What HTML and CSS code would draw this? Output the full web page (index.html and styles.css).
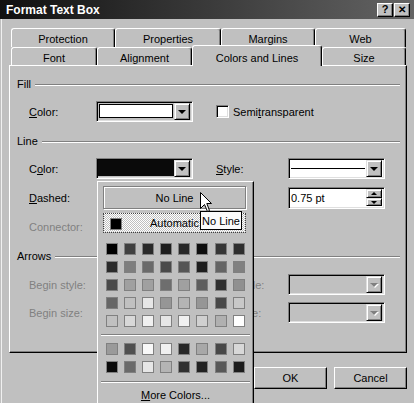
FILE: index.html
```html
<!DOCTYPE html>
<html>
<head>
<meta charset="utf-8">
<link rel="stylesheet" href="styles.css">
</head>
<body>
<div class="window">
  <div class="titlebar">
    <span class="title">Format Text Box</span>
    <div class="tbtns"><span class="tbtn">?</span><span class="tbtn x">✕</span></div>
  </div>

  <div class="dialog">
  <div class="tabs">
    <div class="tabrow back">
      <div class="tab w104">Protection</div>
      <div class="tab w106">Properties</div>
      <div class="tab w94">Margins</div>
      <div class="tab w91">Web</div>
    </div>
    <div class="tabrow front">
      <div class="tab w86">Font</div>
      <div class="tab w95">Alignment</div>
      <div class="tab w130 selected">Colors and Lines</div>
      <div class="tab w84">Size</div>
    </div>
  </div>

  <div class="panel">
    <div class="ghead mt11">Fill</div>
    <div class="row mt10">
      <span class="lbl"><u>C</u>olor:</span>
      <div class="combo"><div class="swatch white"></div><span class="dd"><i class="tri"></i></span></div>
      <span></span>
      <div class="check"><span class="box"></span><span>Semi<u>t</u>ransparent</span></div>
    </div>

    <div class="ghead mt12">Line</div>
    <div class="row mt10">
      <span class="lbl">C<u>o</u>lor:</span>
      <div class="combo"><div class="swatch black"></div><span class="dd"><i class="tri"></i></span></div>
      <span></span>
      <span class="lbl"><u>S</u>tyle:</span>
      <div class="combo white"><div class="linesample"><i></i></div><span class="dd"><i class="tri"></i></span></div>
    </div>
    <div class="row h22 mt8">
      <span class="lbl"><u>D</u>ashed:</span>
      <span></span>
      <span></span>
      <span class="lbl"><u>W</u>eight:</span>
      <div class="combo white"><div class="spintext">0.75 pt</div><span class="spin"><span class="sb"><i class="tri up"></i></span><span class="sb"><i class="tri sm"></i></span></span></div>
    </div>
    <div class="row mt7">
      <span class="lbl dis">Connector:</span>
    </div>

    <div class="ghead mt12">Arrows</div>
    <div class="row mt11">
      <span class="lbl dis">Begin style:</span>
      <span></span>
      <span></span>
      <span class="lbl dis">End style:</span>
      <div class="combo disabled"><div class="swatch none"></div><span class="dd"><i class="tri grey"></i></span></div>
    </div>
    <div class="row mt7">
      <span class="lbl dis">Begin size:</span>
      <span></span>
      <span></span>
      <span class="lbl dis">End size:</span>
      <div class="combo disabled"><div class="swatch none"></div><span class="dd"><i class="tri grey"></i></span></div>
    </div>
  </div>

  <div class="buttons">
    <button class="btn">OK</button>
    <button class="btn">Cancel</button>
  </div>
  </div>

  <div class="popup">
    <div class="noline">No Line</div>
    <div class="auto"><span class="autosw"></span><span class="autotxt">Automatic</span></div>
    <div class="grid g1">
      <span style="background:#000"></span><span style="background:#404040"></span><span style="background:#2a2a2a"></span><span style="background:#1e1e1e"></span><span style="background:#282828"></span><span style="background:#0e0e0e"></span><span style="background:#363636"></span><span style="background:#2e2e2e"></span>
      <span style="background:#2a2a2a"></span><span style="background:#7e7e7e"></span><span style="background:#6a6a6a"></span><span style="background:#4a4a4a"></span><span style="background:#555"></span><span style="background:#1e1e1e"></span><span style="background:#646464"></span><span style="background:#808080"></span>
      <span style="background:#4a4a4a"></span><span style="background:#a0a0a0"></span><span style="background:#a0a0a0"></span><span style="background:#6e6e6e"></span><span style="background:#a0a0a0"></span><span style="background:#5e5e5e"></span><span style="background:#303030"></span><span style="background:#909090"></span>
      <span style="background:#666"></span><span style="background:#c0c0c0"></span><span style="background:#e6e6e6"></span><span style="background:#969696"></span><span style="background:#b4b4b4"></span><span style="background:#969696"></span><span style="background:#484848"></span><span style="background:#c8c8c8"></span>
      <span style="background:#c0c0c0"></span><span style="background:#d8d8d8"></span><span style="background:#f0f0f0"></span><span style="background:#e6e6e6"></span><span style="background:#f0f0f0"></span><span style="background:#d0d0d0"></span><span style="background:#b0b0b0"></span><span style="background:#fff"></span>
    </div>
    <div class="sep"></div>
    <div class="grid g2">
      <span style="background:#9a9a9a"></span><span style="background:#505050"></span><span style="background:#f8f8f8"></span><span style="background:#f0f0f0"></span><span style="background:#282828"></span><span style="background:#a8a8a8"></span><span style="background:#484848"></span><span style="background:#d8d8d8"></span>
      <span style="background:#0a0a0a"></span><span style="background:#6a6a6a"></span><span style="background:#e6e6e6"></span><span style="background:#b4b4b4"></span><span style="background:#303030"></span><span style="background:#222"></span><span style="background:#585858"></span><span style="background:#1c1c1c"></span>
    </div>
    <div class="sep s2"></div>
    <div class="more"><u>M</u>ore Colors...</div>
  </div>

  <div class="tooltip">No Line</div>
  <svg class="cursor" width="13" height="21" viewBox="0 0 13 21"><path d="M0.5 0.5 L0.5 16.5 L4.5 12.5 L7.5 19.5 L9.5 18.5 L6.8 11.5 L11.5 11.5 Z" fill="#fff" stroke="#000" stroke-width="1" stroke-linejoin="miter"/></svg>
</div>
</body>
</html>
```

FILE: styles.css
```css
* { box-sizing: border-box; }
html, body { margin: 0; padding: 0; }
body {
  width: 414px;
  height: 403px;
  overflow: hidden;
  background: #c0c0c0;
  font-family: "Liberation Sans", Arial, sans-serif;
  font-size: 11px;
  color: #000;
}
.window { position: relative; width: 414px; height: 403px; }

.titlebar {
  height: 19px;
  display: flex;
  align-items: center;
  justify-content: space-between;
  padding: 0 4px 0 6px;
  background: linear-gradient(to right, #101010, #646464);
}
.title { color: #fff; font-weight: bold; font-size: 12px; }
.tbtns { display: flex; gap: 1px; }
.tbtn {
  width: 16px; height: 14px;
  background: #c0c0c0;
  border: 1px solid;
  border-color: #fff #000 #000 #fff;
  box-shadow: inset -1px -1px 0 #808080;
  display: flex; align-items: center; justify-content: center;
  font-weight: bold; font-size: 11px; line-height: 1;
}
.tbtn.x { font-size: 10px; }

.dialog {
  margin-left: 1px;
  border-left: 1px solid #f0f0f0;
  height: 384px;
}

.tabs { padding-top: 9px; }
.tabrow { display: flex; padding-left: 9px; }
.tabrow.back { height: 19px; }
.tabrow.front { height: 18px; }
.tab {
  height: 100%;
  border-top: 1px solid #fff;
  border-left: 1px solid #fff;
  border-right: 1px solid #000;
  box-shadow: inset -1px 0 0 #808080;
  border-radius: 3px 3px 0 0;
  display: flex; align-items: center; justify-content: center;
  padding-top: 2px;
  background: #c0c0c0;
}
.tabrow.front .tab { padding-top: 3px; }
.w104 { width: 104px; } .w106 { width: 106px; } .w94 { width: 94px; } .w91 { width: 91px; }
.w86 { width: 86px; } .w95 { width: 95px; } .w130 { width: 130px; } .w84 { width: 84px; }
.tab.selected {
  position: relative;
  z-index: 2;
  height: 21px;
  margin-top: -2px;
  padding-top: 1px;
}

.panel {
  margin-left: 7px;
  width: 398px;
  height: 288px;
  border: 1px solid;
  border-color: #fff #000 #000 #fff;
  box-shadow: inset -1px -1px 0 #808080;
  padding: 0 6px 0 7px;
}
.mt7 { margin-top: 7px; } .mt8 { margin-top: 8px; } .mt10 { margin-top: 10px; }
.mt11 { margin-top: 11px; } .mt12 { margin-top: 12px; }

.ghead { display: flex; align-items: center; height: 14px; gap: 4px; }
.ghead::after {
  content: "";
  flex: 1;
  border-top: 1px solid #808080;
  border-bottom: 1px solid #fff;
  margin-top: 1px;
}

.row {
  display: grid;
  grid-template-columns: 67px 97px 23px 72px 97px;
  align-items: center;
  height: 21px;
  padding-left: 12px;
}
.row.h22 { height: 22px; }
.lbl { white-space: nowrap; }
.lbl.dis { color: #808080; }

.combo {
  width: 97px; height: 21px;
  border: 1px solid;
  border-color: #808080 #fff #fff #808080;
  box-shadow: inset 1px 1px 0 #000, inset -1px -1px 0 #dfdfdf;
  padding: 1px 2px 2px 1px;
  display: flex;
}
.row.h22 .combo { height: 22px; }
.combo.white { background: #fff; }
.combo.disabled { background: #c0c0c0; }
.swatch { flex: 1; border: 1px solid #000; margin: 1px; }
.swatch.white { background: #fff; }
.swatch.black { margin: 0; border: none; background: #0a0a0a; }
.swatch.none { border: none; }
.linesample { flex: 1; display: flex; align-items: center; padding: 0 1px; }
.linesample i { display: block; height: 1px; width: 100%; background: #000; margin-top: 1px; }
.spintext { flex: 1; padding-left: 1px; display: flex; align-items: center; }

.dd {
  width: 16px; height: 17px;
  flex: none;
  background: #c0c0c0;
  border: 1px solid;
  border-color: #dfdfdf #000 #000 #dfdfdf;
  box-shadow: inset 1px 1px 0 #fff, inset -1px -1px 0 #808080;
  display: flex; align-items: center; justify-content: center;
}
.tri {
  display: block; width: 0; height: 0;
  border-left: 4px solid transparent;
  border-right: 4px solid transparent;
  border-top: 4px solid #000;
  margin-top: 1px;
}
.tri.grey { border-top-color: #808080; filter: drop-shadow(1px 1px 0 #fff); }
.tri.sm { border-left-width: 3px; border-right-width: 3px; border-top-width: 3px; }
.tri.up { border-left-width: 3px; border-right-width: 3px; border-top: none; border-bottom: 3px solid #000; }

.spin { width: 16px; flex: none; display: flex; flex-direction: column; }
.sb {
  flex: 1;
  background: #c0c0c0;
  border: 1px solid;
  border-color: #dfdfdf #000 #000 #dfdfdf;
  box-shadow: inset 1px 1px 0 #fff, inset -1px -1px 0 #808080;
  display: flex; align-items: center; justify-content: center;
}

.check { grid-column: 4 / span 2; display: flex; align-items: center; gap: 4px; white-space: nowrap; }
.box {
  width: 13px; height: 13px; flex: none;
  background: #fff;
  border: 1px solid;
  border-color: #808080 #fff #fff #808080;
  box-shadow: inset 1px 1px 0 #000, inset -1px -1px 0 #dfdfdf;
}

.buttons {
  display: flex; justify-content: flex-end; gap: 7px;
  padding-right: 7px;
  margin-top: 14px;
}
.btn {
  width: 73px; height: 22px;
  font: inherit;
  background: #c0c0c0;
  border: 1px solid;
  border-color: #fff #000 #000 #fff;
  box-shadow: inset -1px -1px 0 #808080;
  padding: 0;
}

.popup {
  position: absolute;
  left: 97px; top: 181px;
  width: 157px; height: 240px;
  background: #c0c0c0;
  border: 1px solid;
  border-color: #fff #000 #000 #fff;
  box-shadow: inset -1px -1px 0 #808080;
  z-index: 5;
}
.noline {
  margin: 4px 0 0 5px;
  width: 143px; height: 23px;
  border: 1px solid #808080;
  box-shadow: inset 1px 1px 0 #fff, 1px 1px 0 #fff;
  display: flex; align-items: center; justify-content: center;
}
.auto {
  margin: 4px 0 0 5px;
  width: 143px; height: 20px;
  outline: 1px dotted #404040;
  outline-offset: -1px;
  background: repeating-conic-gradient(#fff 0 25%, #c0c0c0 0 50%) 0 0 / 2px 2px;
  position: relative;
  display: flex; align-items: center; justify-content: center;
}
.autosw {
  position: absolute; left: 7px; top: 5px;
  width: 12px; height: 12px;
  background: #000;
  border: 1px solid #808080;
}
.grid {
  display: grid;
  grid-template-columns: repeat(8, 12px);
  grid-auto-rows: 12px;
  gap: 6px 6.1px;
  margin-left: 8px;
}
.grid span { border: 1px solid #808080; }
.g1 { margin-top: 10px; }
.g2 { margin-top: 7px; }
.sep {
  margin: 7px 0 0 3px;
  width: 149px;
  border-top: 1px solid #808080;
  border-bottom: 1px solid #fff;
}
.sep.s2 { margin-top: 8px; }
.more { margin-top: 5px; line-height: 14px; text-align: center; }

.tooltip {
  position: absolute;
  left: 200px; top: 211px;
  width: 42px; height: 19px;
  background: #fbfbfb;
  border: 1px solid #000;
  display: flex; align-items: center; justify-content: center;
  z-index: 6;
}
.cursor { position: absolute; left: 200px; top: 192px; z-index: 7; }
```
